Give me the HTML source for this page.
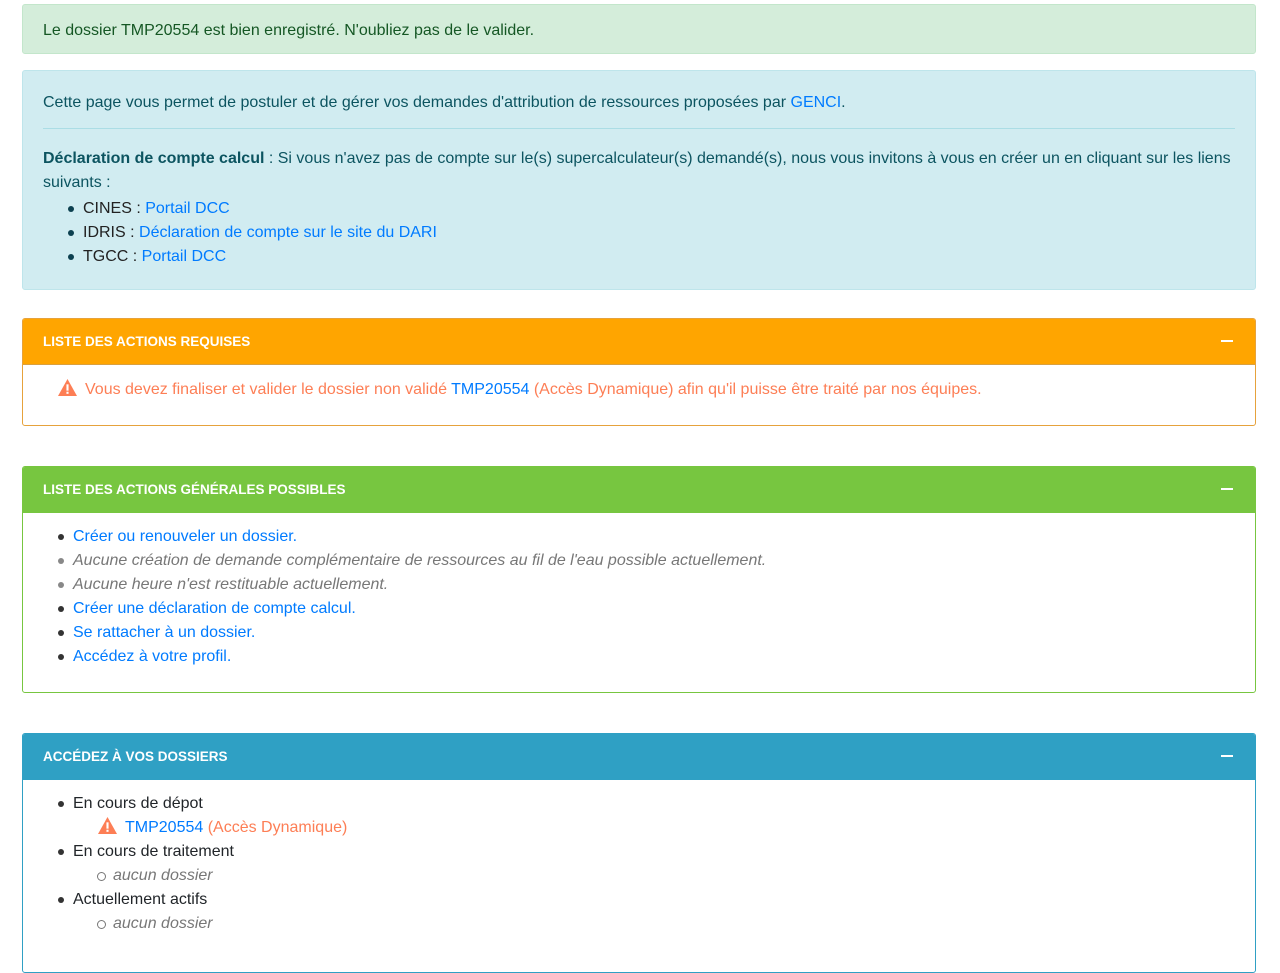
<!DOCTYPE html>
<html><head><meta charset="utf-8"><style>
*{box-sizing:border-box;margin:0;padding:0}
body{width:1280px;height:934px;overflow:hidden;background:#fff;font-family:"Liberation Sans",Arial,sans-serif;font-size:16px;line-height:24px;color:#212529}
.box{position:absolute;left:22px;width:1234px;border:1px solid;border-radius:3px}
a{color:#007bff;text-decoration:none}
.hd{height:46px;color:#fff;font-weight:bold;font-size:13.5px;padding-left:20px;line-height:46px;position:relative;border-radius:2px 2px 0 0}
.hd:after{content:"";position:absolute;right:22px;top:21px;width:12px;height:2px;background:#fff}
ul{list-style:none}
li{position:relative;padding-left:50px}
li:before{content:"";position:absolute;left:35px;top:9px;width:6px;height:6px;border-radius:50%;background:#333}
li.g:before{background:#888}
.g{color:#777;font-style:italic}
.warn{color:#fd7e55}
.sub{padding-left:90px;position:relative}
.sub.c:before{content:"";position:absolute;left:74px;top:8px;width:7px;height:7px;border:1px solid #777;border-radius:50%;background:#fff}
.tri{display:inline-block;vertical-align:-2px;margin-right:8px}
.info li:before{background:#0c4050}
</style></head><body>
<div class="box" style="top:4px;height:50px;background:#d4edda;border-color:#c3e6cb;color:#155724;padding:14px 20px">Le dossier TMP20554 est bien enregistré. N'oubliez pas de le valider.</div>
<div class="box info" style="top:70px;height:220px;background:#d1ecf1;border-color:#bee5eb;color:#0c5460;padding:20px 20px">
<div>Cette page vous permet de postuler et de gérer vos demandes d'attribution de ressources proposées par <a href="#">GENCI</a>.</div>
<div style="border-top:1px solid #abdde5;margin:13px 0 18px"></div>
<div><b>Déclaration de compte calcul</b> : Si vous n'avez pas de compte sur le(s) supercalculateur(s) demandé(s), nous vous invitons à vous en créer un en cliquant sur les liens suivants :</div>
<ul style="color:#222;margin-left:-10px;margin-top:2px"><li>CINES : <a href="#">Portail DCC</a></li><li>IDRIS : <a href="#">Déclaration de compte sur le site du DARI</a></li><li>TGCC : <a href="#">Portail DCC</a></li></ul>
</div>
<div class="box" style="top:318px;height:108px;border-color:#e6a23c">
<div class="hd" style="background:#ffa500;border-bottom:1px solid #d9a040">LISTE DES ACTIONS REQUISES</div>
<div class="warn" style="padding:13px 0 0 35px"><svg class="tri" width="19" height="17" viewBox="0 0 18 16"><path d="M9 0L18 16H0Z" fill="#fd7e55"/><rect x="8" y="5" width="2" height="6" fill="#fff"/><rect x="8" y="12" width="2" height="2" fill="#fff"/></svg>Vous devez finaliser et valider le dossier non validé <a href="#">TMP20554</a> (Accès Dynamique) afin qu'il puisse être traité par nos équipes.</div>
</div>
<div class="box" style="top:466px;height:227px;border-color:#77c640">
<div class="hd" style="background:#77c640">LISTE DES ACTIONS GÉNÉRALES POSSIBLES</div>
<ul style="padding-top:12px"><li><a href="#">Créer ou renouveler un dossier.</a></li><li class="g">Aucune création de demande complémentaire de ressources au fil de l'eau possible actuellement.</li><li class="g">Aucune heure n'est restituable actuellement.</li><li><a href="#">Créer une déclaration de compte calcul.</a></li><li><a href="#">Se rattacher à un dossier.</a></li><li><a href="#">Accédez à votre profil.</a></li></ul>
</div>
<div class="box" style="top:733px;height:240px;border-color:#2fa0c4">
<div class="hd" style="background:#2fa0c4">ACCÉDEZ À VOS DOSSIERS</div>
<ul style="padding-top:12px"><li>En cours de dépot</li></ul>
<div class="sub warn" style="padding-left:75px"><svg class="tri" width="19" height="17" viewBox="0 0 18 16"><path d="M9 0L18 16H0Z" fill="#fd7e55"/><rect x="8" y="5" width="2" height="6" fill="#fff"/><rect x="8" y="12" width="2" height="2" fill="#fff"/></svg><a href="#">TMP20554</a> (Accès Dynamique)</div>
<ul><li>En cours de traitement</li></ul>
<div class="sub c g">aucun dossier</div>
<ul><li>Actuellement actifs</li></ul>
<div class="sub c g">aucun dossier</div>
</div>
</body></html>
